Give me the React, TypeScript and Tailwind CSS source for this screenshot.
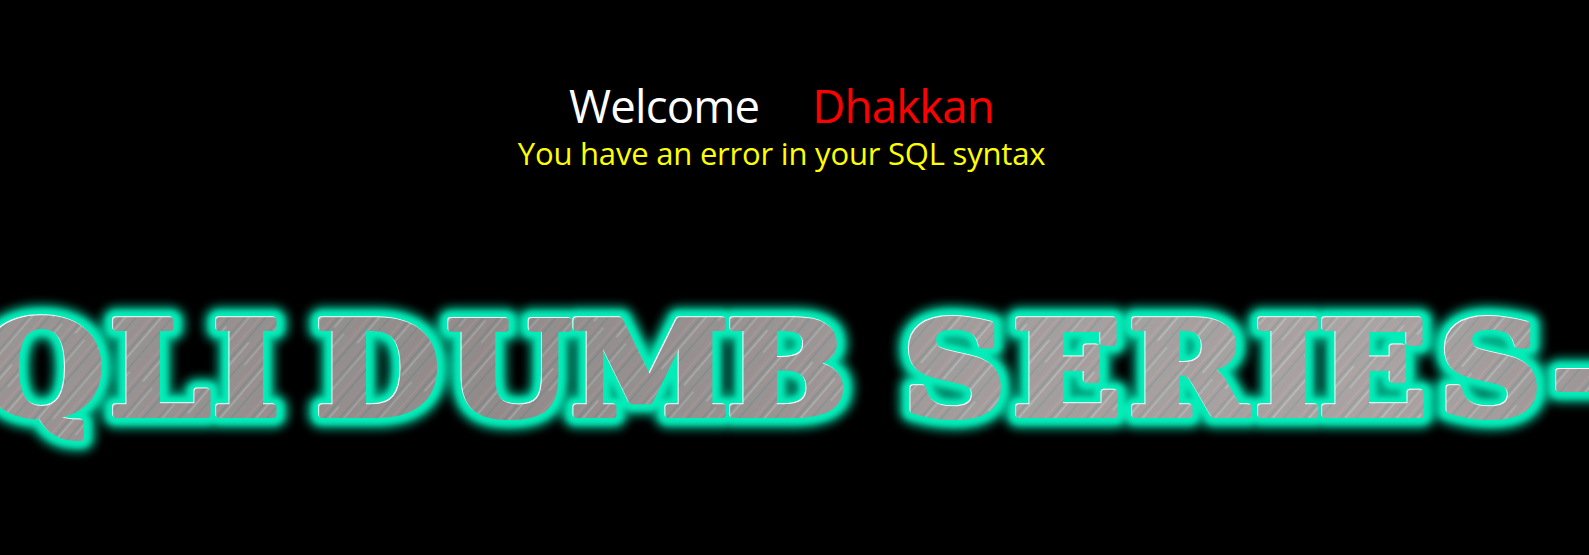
// left edge of each letter in the banner, space included
const LETTERS = 'SQLI DUMB SERIES-1';
const LEFTS = [-125, -20, 110, 213, 290, 316, 447, 571, 727, 870, 903, 1013, 1129, 1255, 1319, 1439, 1552, 1640];
const SCALE_X = 1.1;
const BANNER_TOP = 280;
const BASELINE = 415 - BANNER_TOP;

const xs = LEFTS.map(left => ((left + 3) / SCALE_X - 3).toFixed(1)).join(' ');

function Banner() {
  return (
    <svg width="1589" height="190" className="block">
      <defs>
        <pattern id="brush" width="150" height="26" patternUnits="userSpaceOnUse" patternTransform="rotate(-52)">
          <rect width="150" height="26" fill="#9c9898" />
          <rect y="1" width="150" height="1.5" fill="#b59a9c" />
          <rect y="5" width="150" height="1" fill="#7f8688" />
          <rect y="8" width="90" height="1.5" fill="#bcb8b8" />
          <rect y="12" x="40" width="110" height="1.5" fill="#ad9496" />
          <rect y="16" width="150" height="1" fill="#858a8a" />
          <rect y="19" x="70" width="80" height="1" fill="#c0bcbc" />
          <rect y="22" width="100" height="1.5" fill="#a88f92" />
        </pattern>
        <linearGradient id="sheen" gradientUnits="userSpaceOnUse" x1="0" y1="0" x2="1480" y2="0">
          <stop offset="0" stopColor="#8c8c8c" />
          <stop offset="0.3" stopColor="#606060" />
          <stop offset="0.45" stopColor="#808080" />
          <stop offset="0.6" stopColor="#b8b8b8" />
          <stop offset="0.85" stopColor="#d8d8d8" />
          <stop offset="1" stopColor="#909090" />
        </linearGradient>
        <text
          id="banner-text"
          x={xs}
          y={BASELINE}
          transform={`scale(${SCALE_X} 1)`}
          fontFamily="'DejaVu Serif', serif"
          fontWeight="700"
          fontSize="130"
          strokeLinejoin="round"
        >
          {LETTERS}
        </text>
      </defs>
      {/* glow, bright band, white rim, then the metal on top */}
      <use href="#banner-text" fill="#00d8a8" stroke="#00d8a8" strokeWidth="28" className="opacity-80 blur-[5px]" />
      <use href="#banner-text" fill="#04ecb8" stroke="#04ecb8" strokeWidth="19" className="blur-[2.5px]" />
      <use href="#banner-text" x="-1" y="-1" fill="#ffffff" stroke="#ffffff" strokeWidth="6" />
      <use href="#banner-text" fill="url(#brush)" stroke="url(#brush)" strokeWidth="6" />
      <use href="#banner-text" fill="url(#sheen)" stroke="url(#sheen)" strokeWidth="6" className="opacity-20" />
    </svg>
  );
}

export default function App() {
  return (
    <div className="h-[555px] overflow-hidden bg-black font-['Open_Sans','Noto_Sans',sans-serif]">
      <div className="flex flex-col items-center pt-[77px] pr-[26px]">
        <div className="flex gap-[53px] text-[45.5px] leading-[56px] tracking-[-0.8px]">
          <span className="text-white">Welcome</span>
          <span className="text-[#ff0000]">Dhakkan</span>
        </div>
        <p className="mt-px text-[31px] leading-[38px] tracking-[-0.2px] text-[#ffff00]">You have an error in your SQL syntax</p>
      </div>
      <div className="mt-[108px]">
        <Banner />
      </div>
    </div>
  );
}
